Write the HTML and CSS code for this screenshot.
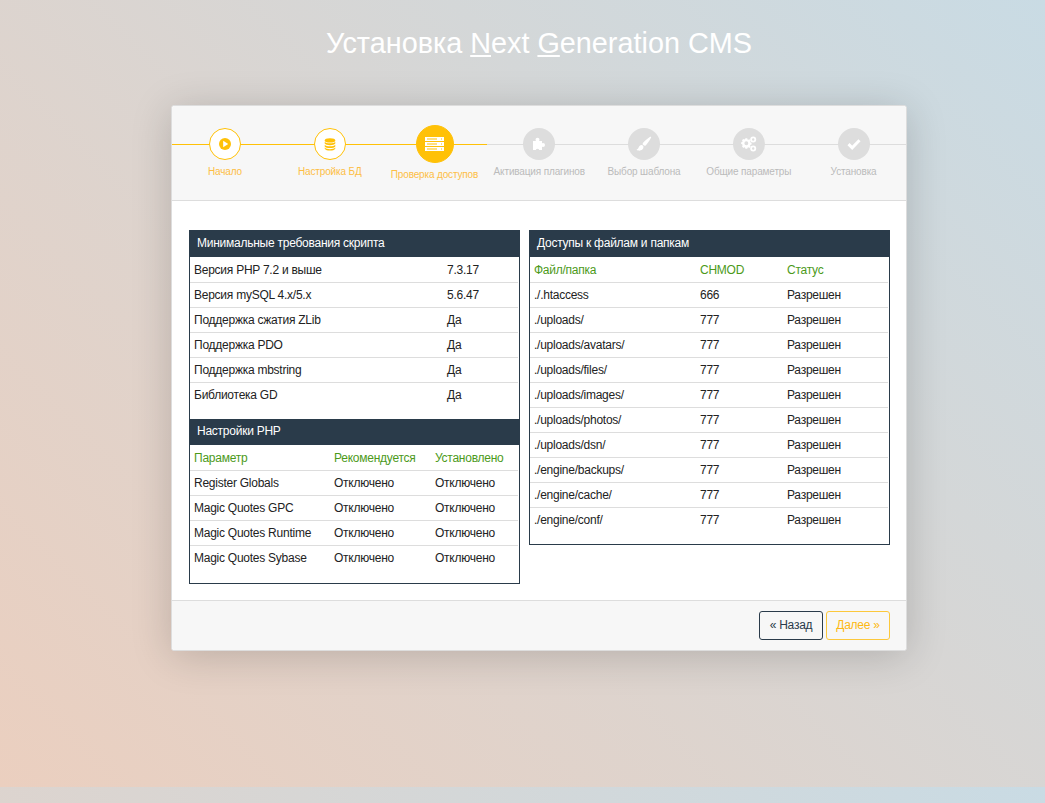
FILE: index.html
```html
<!DOCTYPE html>
<html lang="ru">
<head>
  <meta charset="UTF-8" />
  <title>Установка Next Generation CMS</title>
  <meta name="viewport" content="width=device-width, initial-scale=1.0" />
  <link rel="stylesheet" href="styles.css">
</head>
<body>
  <h1 class="title">Установка <u>N</u>ext <u>G</u>eneration CMS</h1>

  <div class="panel">
    <div class="steps">
      <div class="step done">
        <div class="circle">
          <svg width="14" height="14" viewBox="0 0 14 14"><circle cx="7" cy="7" r="6" fill="#ffc107"/><path d="M5.2 3.8v6.4L10.2 7z" fill="#fff"/></svg>
        </div>
        <div class="label">Начало</div>
      </div>
      <div class="step done">
        <div class="circle">
          <svg width="12" height="13" viewBox="0 0 14 16" fill="#ffc107"><ellipse cx="7" cy="3" rx="6.5" ry="2.6"/><path d="M.5 4.6C1.5 6 4 6.6 7 6.6s5.500-.6 6.500-2v2.200c-1 1.400-3.500 2-6.500 2s-5.500-.6-6.500-2z"/><path d="M.5 8.200c1 1.400 3.500 2 6.500 2s5.500-.6 6.500-2v2.200c-1 1.400-3.500 2-6.500 2s-5.500-.6-6.500-2z"/><path d="M.5 11.700c1 1.400 3.500 2 6.500 2s5.500-.6 6.500-2v1.500c-1 1.600-3.500 2.300-6.500 2.300s-5.500-.7-6.500-2.300z"/></svg>
        </div>
        <div class="label">Настройка БД</div>
      </div>
      <div class="step done active">
        <div class="circle">
          <svg width="19" height="14" viewBox="0 0 19 14"><g fill="#fff"><rect width="19" height="4"/><rect y="5" width="19" height="4"/><rect y="10" width="19" height="4"/></g><g fill="#ffc107"><rect x="2" y="1.500" width="10" height="1"/><rect x="2" y="6.500" width="10" height="1"/><rect x="2" y="11.500" width="10" height="1"/><rect x="16" y="1.500" width="1" height="1"/><rect x="16" y="6.500" width="1" height="1"/><rect x="16" y="11.500" width="1" height="1"/></g></svg>
        </div>
        <div class="label">Проверка доступов</div>
      </div>
      <div class="step">
        <div class="circle">
          <svg width="14" height="14" viewBox="0 0 14 14"><g fill="#fff"><rect x="1" y="4" width="9" height="9"/><circle cx="5.500" cy="2.800" r="2"/><circle cx="11" cy="8" r="2"/></g><circle cx="5.500" cy="13.500" r="1.800" fill="#ddd"/></svg>
        </div>
        <div class="label">Активация плагинов</div>
      </div>
      <div class="step">
        <div class="circle">
          <svg width="16" height="16" viewBox="0 0 16 16" fill="#fff"><path d="M14.200.8c.6-.4 1.200.2.900.8-1.100 2.300-3.400 6-5.200 7.600-.6.500-1.300.7-2 .4L6.700 8.400c-.2-.7.100-1.400.600-1.900C9 4.700 12 2.200 14.200.8z"/><path d="M5.700 9.100c1 .1 1.800.9 1.800 2 0 2.300-2.200 3.600-4.200 3.600-1.100 0-2.200-.4-2.800-1.200.9 0 1.600-.5 1.900-1.400.4-1.500 1.700-3.100 3.300-3z"/></svg>
        </div>
        <div class="label">Выбор шаблона</div>
      </div>
      <div class="step">
        <div class="circle">
          <svg width="16" height="16" viewBox="0 0 16 16" fill="#fff"><path fill-rule="evenodd" d="M4 4.500h2.200l.3 1.300 1 .5 1.200-.6 1.500 1.500-.7 1.200.5 1 1.300.3v2.100l-1.300.3-.5 1 .7 1.200-1.500 1.500-1.200-.7-1 .5-.3 1.300H4l-.3-1.300-1-.5-1.200.7L0 13.800l.7-1.200-.5-1L-1 11.300V9.200l1.200-.3.500-1L0 6.700l1.500-1.500 1.200.6 1-.5zM5.100 8a2.300 2.300 0 1 0 0 4.600 2.300 2.300 0 0 0 0-4.600z" transform="translate(1 -1.500) scale(.85)"/><path fill-rule="evenodd" d="M12.200.5a3 3 0 1 0 0 6 3 3 0 0 0 0-6zm0 1.800a1.200 1.200 0 1 1 0 2.400 1.200 1.200 0 0 1 0-2.400z"/><path fill-rule="evenodd" d="M12.200 9.500a3 3 0 1 0 0 6 3 3 0 0 0 0-6zm0 1.800a1.200 1.200 0 1 1 0 2.400 1.200 1.200 0 0 1 0-2.400z"/></svg>
        </div>
        <div class="label">Общие параметры</div>
      </div>
      <div class="step">
        <div class="circle">
          <svg width="14" height="12" viewBox="0 0 14 12"><path d="M1.500 6.200l3.700 3.600L12.500 2.300" fill="none" stroke="#fff" stroke-width="3"/></svg>
        </div>
        <div class="label">Установка</div>
      </div>
    </div>

    <div class="content">
      <div class="box">
        <div class="box-title">Минимальные требования скрипта</div>
        <table class="tbl gap">
          <colgroup><col class="c-253"><col></colgroup>
          <tr><td>Версия PHP 7.2 и выше</td><td>7.3.17</td></tr>
          <tr><td>Версия mySQL 4.x/5.x</td><td>5.6.47</td></tr>
          <tr><td>Поддержка сжатия ZLib</td><td>Да</td></tr>
          <tr><td>Поддержка PDO</td><td>Да</td></tr>
          <tr><td>Поддержка mbstring</td><td>Да</td></tr>
          <tr><td>Библиотека GD</td><td>Да</td></tr>
        </table>
        <div class="box-title second">Настройки PHP</div>
        <table class="tbl">
          <colgroup><col class="c-140"><col class="c-101"><col></colgroup>
          <tr class="head"><td>Параметр</td><td>Рекомендуется</td><td>Установлено</td></tr>
          <tr><td>Register Globals</td><td>Отключено</td><td>Отключено</td></tr>
          <tr><td>Magic Quotes GPC</td><td>Отключено</td><td>Отключено</td></tr>
          <tr><td>Magic Quotes Runtime</td><td>Отключено</td><td>Отключено</td></tr>
          <tr><td>Magic Quotes Sybase</td><td>Отключено</td><td>Отключено</td></tr>
        </table>
      </div>

      <div class="box">
        <div class="box-title">Доступы к файлам и папкам</div>
        <table class="tbl gap">
          <colgroup><col class="c-166"><col class="c-87"><col></colgroup>
          <tr class="head"><td>Файл/папка</td><td>CHMOD</td><td>Статус</td></tr>
          <tr><td>./.htaccess</td><td>666</td><td>Разрешен</td></tr>
          <tr><td>./uploads/</td><td>777</td><td>Разрешен</td></tr>
          <tr><td>./uploads/avatars/</td><td>777</td><td>Разрешен</td></tr>
          <tr><td>./uploads/files/</td><td>777</td><td>Разрешен</td></tr>
          <tr><td>./uploads/images/</td><td>777</td><td>Разрешен</td></tr>
          <tr><td>./uploads/photos/</td><td>777</td><td>Разрешен</td></tr>
          <tr><td>./uploads/dsn/</td><td>777</td><td>Разрешен</td></tr>
          <tr><td>./engine/backups/</td><td>777</td><td>Разрешен</td></tr>
          <tr><td>./engine/cache/</td><td>777</td><td>Разрешен</td></tr>
          <tr><td>./engine/conf/</td><td>777</td><td>Разрешен</td></tr>
        </table>
      </div>
    </div>

    <div class="footer">
      <a class="btn btn-back">« Назад</a>
      <a class="btn btn-next">Далее »</a>
    </div>
  </div>
</body>
</html>
```

FILE: styles.css
```css
* {
  box-sizing: border-box;
}

body {
  font-family: "Liberation Sans", Arial, sans-serif;
  font-size: 12px;
  letter-spacing: -0.25px;
  margin: 0;
  padding: 0 138px 136px 171px;
  height: 787px;
  color: #222;
  background: linear-gradient(45deg, #ebcfbf, #c9dbe4);
}

.title {
  margin: 0;
  height: 105px;
  padding-top: 26px;
  line-height: 34px;
  font-size: 28.8px;
  font-weight: normal;
  letter-spacing: 0;
  color: #fff;
  text-align: center;
}

.panel {
  width: 736px;
  border: 1px solid #ddd;
  border-radius: 3px;
  background: #fff;
  box-shadow: 0 5px 40px rgba(0, 0, 0, 0.18);
}

/* шаги установки */
.steps {
  display: flex;
  height: 95px;
  padding-left: 0.6px;
  background: #f7f7f7;
  border-bottom: 1px solid #ddd;
  border-radius: 3px 3px 0 0;
}

.step {
  position: relative;
  flex: 1;
  padding-top: 22px;
  text-align: center;
  color: #bbb;
}

.step::before {
  content: "";
  position: absolute;
  top: 38px;
  left: 0;
  right: 0;
  height: 1px;
  background: #ddd;
}

.step:first-child::before {
  left: -1px;
}

.step.done {
  color: #fdbe45;
}

.step.done::before {
  background: #ffc107;
}

.circle {
  position: relative;
  display: flex;
  align-items: center;
  justify-content: center;
  width: 32px;
  height: 32px;
  margin: 0 auto;
  border-radius: 50%;
  background: #ddd;
}

.step.done .circle {
  background: #fff;
  border: 1px solid #ffc107;
}

.step.active {
  padding-top: 19px;
}

.step.active .circle {
  width: 38px;
  height: 38px;
  background: #ffc107;
}

.label {
  margin-top: 6px;
  font-size: 10px;
  line-height: 12px;
  letter-spacing: -0.15px;
  white-space: nowrap;
}

/* таблицы */
.content {
  display: grid;
  grid-template-columns: 331px 361px;
  gap: 9px;
  align-items: start;
  padding: 29px 16px 16px 17px;
}

.box {
  border: 1px solid #2a3b4a;
}

.box-title {
  height: 26px;
  padding-left: 7px;
  line-height: 24px;
  background: #2a3b4a;
  color: #fff;
}

.tbl {
  width: calc(100% - 1px);
  margin-bottom: 13px;
  border-collapse: collapse;
  table-layout: fixed;
}

.tbl.gap {
  margin-bottom: 11px;
}

.tbl td {
  height: 25px;
  padding: 0 4px;
  line-height: 16px;
  border-top: 1px solid #ddd;
  white-space: nowrap;
}

.tbl tr:first-child td {
  border-top: 1px solid #fff;
}

.head td {
  color: #4c9a1a;
}

.c-253 { width: 253px; }
.c-140 { width: 140px; }
.c-101 { width: 101px; }
.c-166 { width: 166px; }
.c-87 { width: 87px; }

/* кнопки */
.footer {
  display: flex;
  justify-content: flex-end;
  gap: 3px;
  padding: 10px 16px;
  background: #f7f7f7;
  border-top: 1px solid #ddd;
  border-radius: 0 0 3px 3px;
}

.btn {
  width: 64px;
  height: 29px;
  line-height: 27px;
  text-align: center;
  border: 1px solid #2a3b4a;
  border-radius: 3px;
  color: #2a3b4a;
  cursor: pointer;
}

.btn-next {
  border-color: #fcc83c;
  color: #fdb913;
}
```
